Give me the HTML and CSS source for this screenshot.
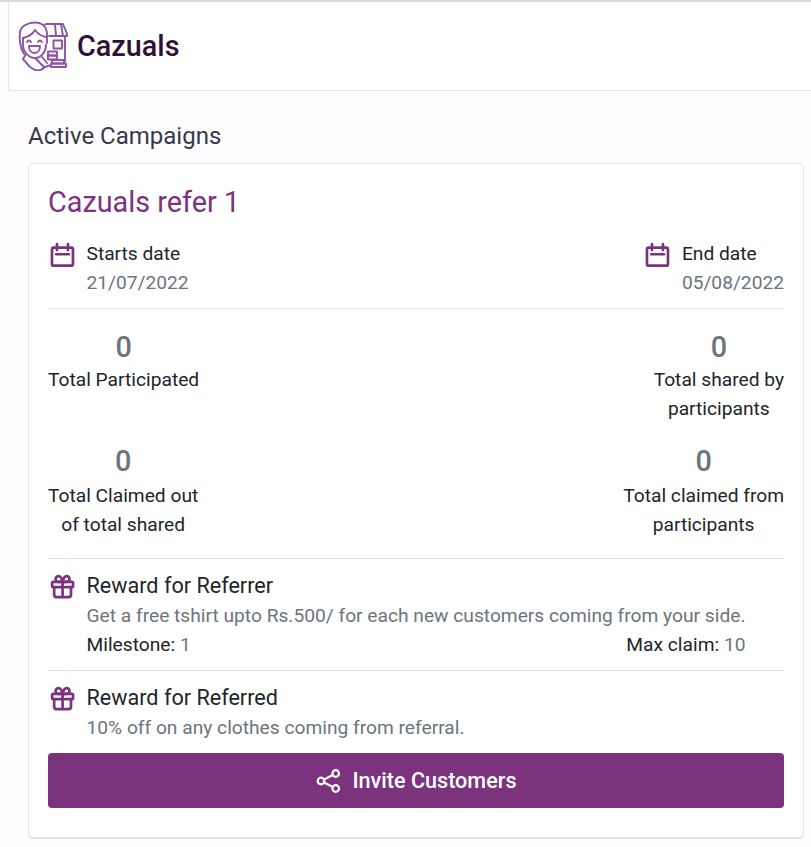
FILE: index.html
```html
<!DOCTYPE html>
<html>
<head>
  <meta charset="utf-8">
  <meta name="viewport" content="width=device-width, initial-scale=1">
  <title>Cazuals</title>
  <link rel="stylesheet" href="styles.css">
</head>
<body>
  <header class="topbar">
    <svg class="logo" width="50" height="50" viewBox="0 0 50 50" fill="none" stroke="#8a55a4" stroke-width="1.900" stroke-linecap="round" stroke-linejoin="round">
      <path d="M26 4l2-1h17l4 10v2H31"/>
      <path d="M37 3l1 12M43 3l2 12"/>
      <path d="M47 15v25"/>
      <rect x="35.500" y="19.500" width="8.500" height="8"/>
      <path d="M6 33C2 27 1 17 2 11 3 5 10 1.500 17 1.500 24 1.500 29 6 29 13v9"/>
      <path d="M5 17c5-1 9-3 12-8 2 3 6 6 11 7"/>
      <path d="M5 17v7c0 7 6 13 12 13 6 0 11-6 11-13"/>
      <path d="M9 21q2-3 4 0M20 21q2-3 4 0"/>
      <path d="M11 25h11c0 4-2 7-5.500 7S11 29 11 25z"/>
      <path d="M8 33l-3 5 7 8 5 3c4 1 8-1 10-3l6-2"/>
      <path d="M18 38l8 8M24 36l5 6"/>
      <rect x="30" y="30.500" width="9" height="4"/>
      <rect x="30" y="34.500" width="9" height="4"/>
      <rect x="34" y="39" width="12" height="3.500"/>
      <rect x="33" y="42.500" width="15" height="3.500"/>
    </svg>
    <span class="brand">Cazuals</span>
  </header>

  <main class="content">
    <h2 class="section-title">Active Campaigns</h2>

    <section class="card">
      <h3 class="card-title">Cazuals refer 1</h3>

      <div class="dates">
        <div class="date-item">
          <svg class="icon" width="28" height="28" viewBox="0 0 24 24" fill="none" stroke="#7b337e" stroke-width="2.300" stroke-linecap="round" stroke-linejoin="round"><rect x="3.400" y="6.600" width="18" height="15.400" rx="1.500"/><path d="M7.700 3.600v5M17.100 3.600v5M7 12.200h11"/></svg>
          <div>
            <div class="label">Starts date</div>
            <div class="muted">21/07/2022</div>
          </div>
        </div>
        <div class="date-item">
          <svg class="icon" width="28" height="28" viewBox="0 0 24 24" fill="none" stroke="#7b337e" stroke-width="2.300" stroke-linecap="round" stroke-linejoin="round"><rect x="3.400" y="6.600" width="18" height="15.400" rx="1.500"/><path d="M7.700 3.600v5M17.100 3.600v5M7 12.200h11"/></svg>
          <div>
            <div class="label">End date</div>
            <div class="muted">05/08/2022</div>
          </div>
        </div>
      </div>

      <div class="stats">
        <div class="stat-row">
          <div class="stat">
            <div class="stat-num">0</div>
            <div class="stat-label">Total Participated</div>
          </div>
          <div class="stat">
            <div class="stat-num">0</div>
            <div class="stat-label">Total shared by<br>participants</div>
          </div>
        </div>
        <div class="stat-row">
          <div class="stat">
            <div class="stat-num">0</div>
            <div class="stat-label">Total Claimed out<br>of total shared</div>
          </div>
          <div class="stat">
            <div class="stat-num">0</div>
            <div class="stat-label">Total claimed from<br>participants</div>
          </div>
        </div>
      </div>

      <div class="reward reward-first">
        <svg class="icon gift" width="28" height="28" viewBox="0 0 24 24" fill="none" stroke="#7b337e" stroke-width="2.300" stroke-linecap="round" stroke-linejoin="round"><rect x="3.500" y="8.500" width="18" height="4.500" rx="1"/><path d="M5.300 13v6.500a2 2 0 0 0 2 2h10.400a2 2 0 0 0 2-2V13M12.500 8.500v13M12.500 8.500H9a2.500 2.500 0 0 1 0-5c2.500 0 3.500 5 3.500 5zM12.500 8.500H16a2.500 2.500 0 0 0 0-5c-2.500 0-3.500 5-3.500 5z"/></svg>
        <div class="reward-body">
          <div class="reward-title">Reward for Referrer</div>
          <div class="muted reward-text">Get a free tshirt upto Rs.500/ for each new customers coming from your side.</div>
          <div class="reward-meta">
            <span class="label">Milestone: <span class="muted">1</span></span>
            <span class="label">Max claim: <span class="muted">10</span></span>
          </div>
        </div>
      </div>

      <div class="reward">
        <svg class="icon gift" width="28" height="28" viewBox="0 0 24 24" fill="none" stroke="#7b337e" stroke-width="2.300" stroke-linecap="round" stroke-linejoin="round"><rect x="3.500" y="8.500" width="18" height="4.500" rx="1"/><path d="M5.300 13v6.500a2 2 0 0 0 2 2h10.400a2 2 0 0 0 2-2V13M12.500 8.500v13M12.500 8.500H9a2.500 2.500 0 0 1 0-5c2.500 0 3.500 5 3.500 5zM12.500 8.500H16a2.500 2.500 0 0 0 0-5c-2.500 0-3.500 5-3.500 5z"/></svg>
        <div class="reward-body">
          <div class="reward-title">Reward for Referred</div>
          <div class="muted reward-text">10% off on any clothes coming from referral.</div>
        </div>
      </div>

      <button class="invite">
        <svg width="26" height="26" viewBox="0 0 26 26" fill="none" stroke="#fff" stroke-width="2.200" stroke-linecap="round" stroke-linejoin="round"><circle cx="20.700" cy="5.500" r="3.300"/><circle cx="6" cy="13" r="3.300"/><circle cx="20.700" cy="20.500" r="3.300"/><path d="M9 14.600l8.800 4.400M17.800 7.100L9 11.500"/></svg>
        Invite Customers
      </button>
    </section>
  </main>
</body>
</html>
```

FILE: styles.css
```css
* {
  box-sizing: border-box;
}

body {
  margin: 0;
  font-family: Roboto, "Liberation Sans", sans-serif;
  font-size: 19.2px;
  line-height: 1.5;
  color: #212529;
  background-color: #fffdff;
  border-top: 2px solid #d9d9de;
}

.topbar {
  display: flex;
  align-items: center;
  height: 89px;
  margin-left: 8px;
  padding-left: 9px;
  background-color: #fff;
  border-left: 1px solid #e4e4ea;
  border-bottom: 1px solid #e4e4ea;
}

.logo {
  margin-right: 9px;
}

.brand {
  margin-top: 2px;
  font-size: 28.8px;
  font-weight: 500;
  color: #2f1138;
}

.content {
  padding: 27px 7px 0 28px;
}

.section-title {
  margin: 0 0 9px;
  font-size: 24px;
  line-height: 36px;
  font-weight: 400;
  color: #343a4a;
}

.card {
  padding: 17px 19px 29px 19px;
  background-color: #fff;
  border: 1px solid #e2e2e8;
  border-bottom-width: 2px;
  border-radius: 5px;
}

.card-title {
  margin: 0 0 16px;
  font-size: 28.8px;
  line-height: 1.5;
  font-weight: 400;
  color: #7b337e;
}

.dates {
  display: flex;
  justify-content: space-between;
  padding-bottom: 10px;
  border-bottom: 1px solid #e4e4e8;
}

.date-item {
  display: flex;
  gap: 10.500px;
}

.icon {
  flex: none;
}

.gift {
  margin-top: 2px;
}

.label {
  color: #212529;
}

.muted {
  color: #6c757d;
}

.stats {
  display: flex;
  flex-direction: column;
  gap: 19px;
  padding: 19px 0 18px;
  border-bottom: 1px solid #e4e4e8;
}

.stat-row {
  display: flex;
  justify-content: space-between;
}

.stat-row + .stat-row .stat-label {
  margin-top: 2px;
}

.stat {
  text-align: center;
}

.stat-num {
  font-size: 28.8px;
  line-height: 38px;
  font-weight: 500;
  color: #6c757d;
}

.reward {
  display: flex;
  gap: 10.500px;
  padding-top: 11px;
}

.reward-first {
  padding-bottom: 10px;
  border-bottom: 1px solid #e4e4e8;
}

.reward-body {
  flex: 1;
  padding-right: 39.500px;
}

.reward-title {
  font-size: 21.6px;
  line-height: 1.5;
  color: #212529;
}

.reward-text {
  white-space: nowrap;
}

.reward-meta {
  display: flex;
  justify-content: space-between;
}

.invite {
  display: flex;
  align-items: center;
  justify-content: center;
  gap: 11px;
  width: 100%;
  height: 55px;
  margin-top: 10px;
  background-color: #7b337e;
  color: #fff;
  border: none;
  border-radius: 4px;
  font-family: inherit;
  font-size: 21.6px;
  font-weight: 500;
}
```
